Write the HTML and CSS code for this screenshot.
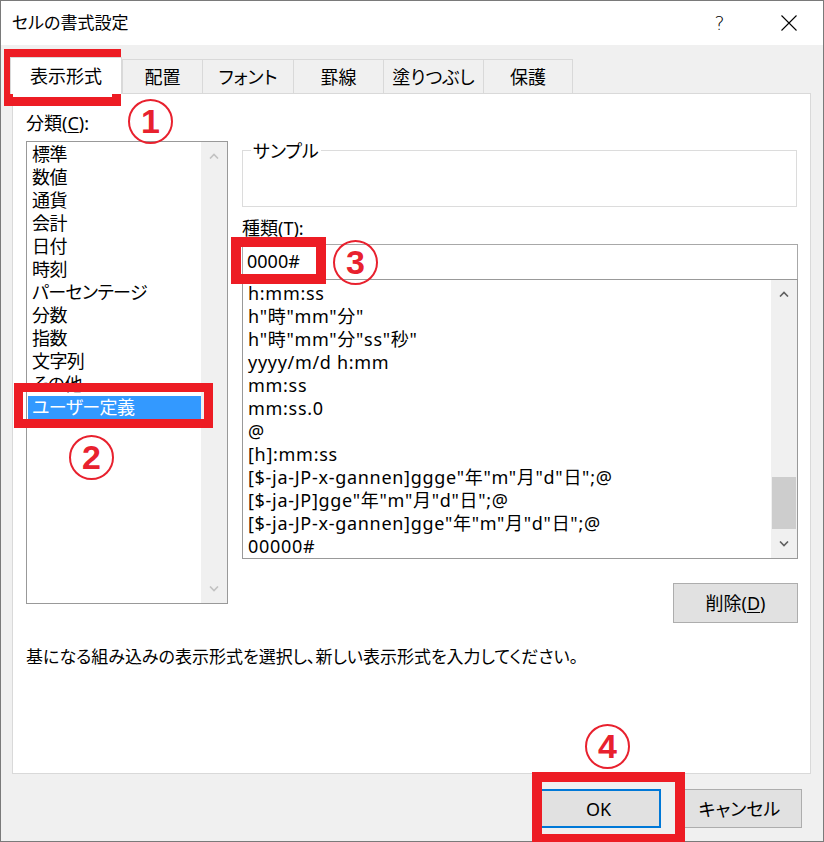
FILE: index.html
```html
<!DOCTYPE html>
<html lang="ja">
<head>
<meta charset="utf-8">
<title>セルの書式設定</title>
<link rel="stylesheet" href="styles.css">
</head>
<body>
<div class="window">
  <header class="titlebar">
    <span class="title">セルの書式設定</span>
    <span class="tbtn help">?</span>
    <span class="tbtn close"><svg width="16" height="16" viewBox="0 0 16 16"><path d="M0.5 0.5 L15.5 15.5 M15.5 0.5 L0.5 15.5" stroke="#000" stroke-width="1.1" fill="none"/></svg></span>
  </header>
  <div class="content">
    <nav class="tabs">
      <div class="tab active">表示形式</div>
      <div class="tab t1">配置</div>
      <div class="tab t2">フォント</div>
      <div class="tab t3">罫線</div>
      <div class="tab t4">塗りつぶし</div>
      <div class="tab t5">保護</div>
    </nav>
    <section class="panel">
      <div class="cols">
        <div class="left">
          <div class="label cat-label">分類(<u>C</u>):</div>
          <div class="listbox catbox">
            <ul class="items cats">
              <li>標準</li>
              <li>数値</li>
              <li>通貨</li>
              <li>会計</li>
              <li>日付</li>
              <li>時刻</li>
              <li>パーセンテージ</li>
              <li>分数</li>
              <li>指数</li>
              <li>文字列</li>
              <li>その他</li>
              <li class="sel">ユーザー定義</li>
            </ul>
            <div class="vscroll disabled">
              <div class="arrow"><svg width="10" height="6" viewBox="0 0 10 6"><polyline points="1,5.5 5,1.5 9,5.5" fill="none" stroke-width="1.6"/></svg></div>
              <div class="track"></div>
              <div class="arrow"><svg width="10" height="6" viewBox="0 0 10 6"><polyline points="1,0.5 5,4.5 9,0.5" fill="none" stroke-width="1.6"/></svg></div>
            </div>
          </div>
        </div>
        <div class="right">
          <div class="sample"><span class="legend">サンプル</span></div>
          <div class="label type-label">種類(<u>T</u>):</div>
          <div class="input">0000#</div>
          <div class="listbox typebox">
            <ul class="items types">
              <li>h:mm:ss</li>
              <li>h"時"mm"分"</li>
              <li>h"時"mm"分"ss"秒"</li>
              <li>yyyy/m/d h:mm</li>
              <li>mm:ss</li>
              <li>mm:ss.0</li>
              <li>@</li>
              <li>[h]:mm:ss</li>
              <li>[$-ja-JP-x-gannen]ggge"年"m"月"d"日";@</li>
              <li>[$-ja-JP]gge"年"m"月"d"日";@</li>
              <li>[$-ja-JP-x-gannen]gge"年"m"月"d"日";@</li>
              <li>00000#</li>
            </ul>
            <div class="vscroll">
              <div class="arrow"><svg width="10" height="6" viewBox="0 0 10 6"><polyline points="1,5.5 5,1.5 9,5.5" fill="none" stroke-width="1.6"/></svg></div>
              <div class="track"><div class="thumb"></div></div>
              <div class="arrow"><svg width="10" height="6" viewBox="0 0 10 6"><polyline points="1,0.5 5,4.5 9,0.5" fill="none" stroke-width="1.6"/></svg></div>
            </div>
          </div>
          <div class="btnrow"><button class="btn del">削除(<u>D</u>)</button></div>
        </div>
      </div>
      <p class="desc">基になる組み込みの表示形式を選択し、新しい表示形式を入力してください。</p>
    </section>
    <footer class="actions">
      <button class="btn ok">OK</button>
      <button class="btn cancel">キャンセル</button>
    </footer>
  </div>

  <div class="mark m1"></div>
  <div class="mark m2"></div>
  <div class="mark m3"></div>
  <div class="mark m4"></div>
  <div class="num n1">1</div>
  <div class="num n2">2</div>
  <div class="num n3">3</div>
  <div class="num n4">4</div>
</div>
</body>
</html>
```
FILE: styles.css
```css
* { box-sizing: border-box; margin: 0; padding: 0; }
html, body { width: 824px; height: 842px; overflow: hidden; }
body {
  font-family: "Noto Sans", "Noto Sans CJK JP", sans-serif;
  font-size: 18px;
  color: #000;
  background: #fff;
  font-feature-settings: "palt";
}
u { text-decoration: underline; text-underline-offset: 2px; text-decoration-thickness: 1px; }

.window {
  position: relative;
  width: 824px;
  height: 842px;
  border: 1px solid #7a7a7a;
  background: #f0f0f0;
  display: flex;
  flex-direction: column;
}

.titlebar {
  height: 44px;
  background: #fff;
  display: flex;
  align-items: center;
  padding-left: 11px;
  flex-shrink: 0;
}
.title { flex: 1; font-size: 17px; line-height: 24px; }
.tbtn {
  width: 69px;
  height: 44px;
  display: flex;
  align-items: center;
  justify-content: center;
}
.help { font-size: 19px; font-family: "DejaVu Sans", sans-serif; font-weight: 300; }
.close svg { display: block; }

.content {
  flex: 1;
  padding: 12px 11px 0 11px;
  display: flex;
  flex-direction: column;
}

.tabs {
  display: flex;
  align-items: flex-end;
  height: 36px;
  position: relative;
  z-index: 1;
}
.tab {
  height: 34px;
  border: 1px solid #d9d9d9;
  border-bottom: none;
  background: #f0f0f0;
  display: flex;
  align-items: center;
  justify-content: center;
  line-height: 24px;
  margin-left: -1px;
}
.tab.active {
  width: 112px;
  height: 37px;
  margin-left: -2px;
  margin-bottom: -1px;
  background: #fff;
  border-color: #d9d9d9;
}
.t1 { width: 81px; margin-left: 0; }
.t2 { width: 92px; }
.t3 { width: 91px; }
.t4 { width: 101px; }
.t5 { width: 90px; }

.panel {
  width: 799px;
  height: 681px;
  border: 1px solid #d9d9d9;
  background: #fff;
  padding: 0 12px 0 13px;
}
.cols { display: flex; gap: 14px; }
.left { width: 202px; flex-shrink: 0; }
.right { flex: 1; }

.label { line-height: 20px; height: 20px; }
.cat-label { margin-top: 19px; }

.listbox {
  border: 1px solid #999;
  display: flex;
  background: #fff;
  overflow: hidden;
}
.catbox { margin-top: 8px; height: 463px; }
.items { list-style: none; flex: 1; padding: 1px 0 0 1px; min-width: 0; }
.items li { line-height: 23px; height: 23px; padding-left: 4px; white-space: nowrap; }
.cats li { letter-spacing: -0.6px; }
.items li.sel { background: #3399ff; color: #fff; }

.vscroll {
  width: 26px;
  flex-shrink: 0;
  background: #f0f0f0;
  display: flex;
  flex-direction: column;
}
.vscroll .arrow {
  height: 28px;
  display: flex;
  align-items: center;
  justify-content: center;
}
.vscroll .arrow svg { display: block; stroke: #606060; }
.vscroll.disabled .arrow svg { stroke: #c2c2c2; }
.vscroll .track { flex: 1; display: flex; flex-direction: column; justify-content: flex-end; padding: 0 1px; }
.thumb { height: 52px; background: #cdcdcd; margin-bottom: 1px; }

.sample {
  position: relative;
  margin-top: 56px;
  height: 57px;
  border: 1px solid #dcdcdc;
  margin-right: 1px;
}
.legend {
  position: absolute;
  left: 8px;
  top: -11px;
  padding: 0 2px;
  background: #fff;
  line-height: 22px;
}
.type-label { margin-top: 11px; }
.input {
  margin-top: 6px;
  height: 35px;
  border: 1px solid #a8a8a8;
  border-bottom: none;
  padding-left: 4px;
  line-height: 33px;
}
.typebox { height: 280px; border-color: #999; }
.types { padding-top: 2px; }
.types li { letter-spacing: 0.7px; }

.btnrow { display: flex; justify-content: flex-end; margin-top: 24px; }
.btn {
  font: inherit;
  color: #000;
  background: #e1e1e1;
  border: 1px solid #adadad;
  line-height: 24px;
}
.del { width: 125px; height: 40px; }

.desc { margin-top: 22px; line-height: 24px; font-size: 17px; }

.actions {
  display: flex;
  justify-content: flex-end;
  gap: 16px;
  padding: 15px 10px 0 0;
}
.ok, .cancel { width: 125px; height: 39px; }
.ok { border: 2px solid #0078d7; }

.mark {
  position: absolute;
  border: 9px solid #ed1c24;
}
.m1 { left: 3px; top: 48px; width: 117px; height: 57px; }
.m2 { left: 13px; top: 382px; width: 199px; height: 45px; }
.m3 { left: 230px; top: 236px; width: 95px; height: 47px; border-width: 10px; }
.m4 { left: 531px; top: 771px; width: 153px; height: 72px; border-width: 10px; }

.num {
  position: absolute;
  width: 45px;
  height: 45px;
  border: 2px solid #e8212e;
  border-radius: 50%;
  color: #e8212e;
  font-family: "Liberation Sans", sans-serif;
  font-weight: 700;
  font-size: 34px;
  line-height: 41px;
  text-align: center;
}
.n1 { left: 127px; top: 98px; }
.n2 { left: 68px; top: 434px; }
.n3 { left: 332px; top: 239px; }
.n4 { left: 584px; top: 723px; }
```
